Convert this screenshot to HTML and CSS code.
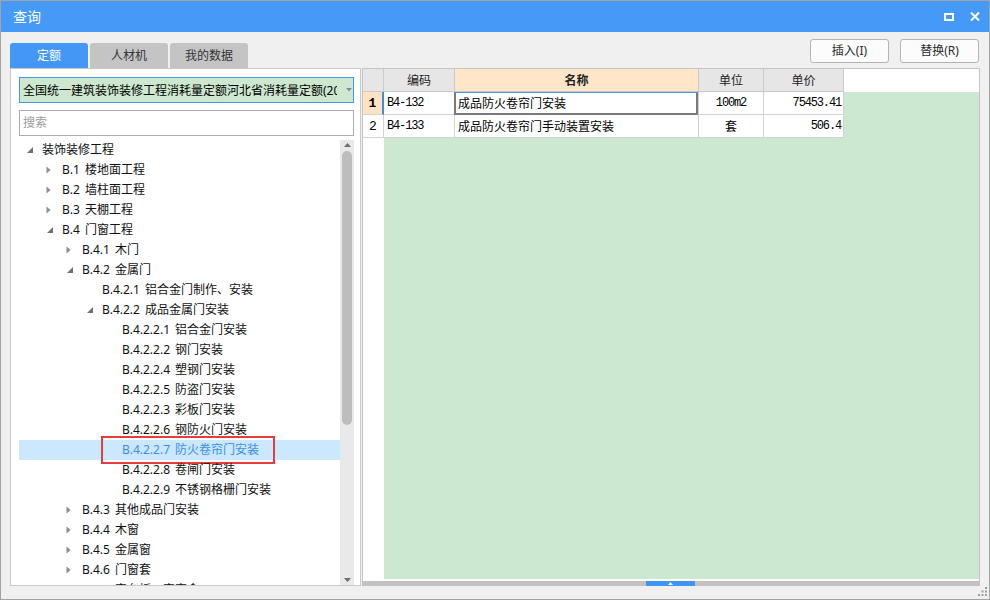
FILE: index.html
```html
<!DOCTYPE html>
<html lang="zh-CN">
<head>
<meta charset="utf-8">
<title>查询</title>
<link rel="stylesheet" href="styles.css">
</head>
<body>
<div class="window">
  <div class="titlebar">
    <span class="title">查询</span>
    <div class="tb-icons">
      <svg width="10" height="8" viewBox="0 0 10 8"><rect x="1" y="1" width="8" height="6" fill="none" stroke="#fff" stroke-width="2"/></svg>
      <svg width="10" height="9" viewBox="0 0 10 9"><path d="M1 0.5L9 8.5M9 0.5L1 8.5" stroke="#fff" stroke-width="2"/></svg>
    </div>
  </div>
  <div class="content">
    <div class="toolbar">
      <div class="tabs">
        <div class="tab active">定额</div>
        <div class="tab">人材机</div>
        <div class="tab">我的数据</div>
      </div>
      <div class="buttons">
        <div class="btn">插入(I)</div>
        <div class="btn">替换(R)</div>
      </div>
    </div>
    <div class="main">
      <div class="left-panel">
        <div class="combo">
          <div class="combo-text">全国统一建筑装饰装修工程消耗量定额河北省消耗量定额(2013)</div>
          <svg class="combo-arrow" width="6" height="4" viewBox="0 0 6 4"><path d="M0 0H6L3 3.5Z" fill="#8c8c8c"/></svg>
        </div>
        <div class="search">搜索</div>
        <div class="tree">
          <div class="tree-rows">
            <div class="row l0"><span class="tg ex"><svg width="6" height="6" viewBox="0 0 6 6"><path d="M6 0V6H0Z" fill="#707070"/></svg></span><span>装饰装修工程</span></div>
            <div class="row l1"><span class="tg co"><svg width="5" height="8" viewBox="0 0 5 8"><path d="M0.5 0.5L4.5 4L0.5 7.5Z" fill="#8a8a8a"/></svg></span><span>B.1 楼地面工程</span></div>
            <div class="row l1"><span class="tg co"><svg width="5" height="8" viewBox="0 0 5 8"><path d="M0.5 0.5L4.5 4L0.5 7.5Z" fill="#8a8a8a"/></svg></span><span>B.2 墙柱面工程</span></div>
            <div class="row l1"><span class="tg co"><svg width="5" height="8" viewBox="0 0 5 8"><path d="M0.5 0.5L4.5 4L0.5 7.5Z" fill="#8a8a8a"/></svg></span><span>B.3 天棚工程</span></div>
            <div class="row l1"><span class="tg ex"><svg width="6" height="6" viewBox="0 0 6 6"><path d="M6 0V6H0Z" fill="#707070"/></svg></span><span>B.4 门窗工程</span></div>
            <div class="row l2"><span class="tg co"><svg width="5" height="8" viewBox="0 0 5 8"><path d="M0.5 0.5L4.5 4L0.5 7.5Z" fill="#8a8a8a"/></svg></span><span>B.4.1 木门</span></div>
            <div class="row l2"><span class="tg ex"><svg width="6" height="6" viewBox="0 0 6 6"><path d="M6 0V6H0Z" fill="#707070"/></svg></span><span>B.4.2 金属门</span></div>
            <div class="row l3"><span class="tg"></span><span>B.4.2.1 铝合金门制作、安装</span></div>
            <div class="row l3"><span class="tg ex"><svg width="6" height="6" viewBox="0 0 6 6"><path d="M6 0V6H0Z" fill="#707070"/></svg></span><span>B.4.2.2 成品金属门安装</span></div>
            <div class="row l4"><span class="tg"></span><span>B.4.2.2.1 铝合金门安装</span></div>
            <div class="row l4"><span class="tg"></span><span>B.4.2.2.2 钢门安装</span></div>
            <div class="row l4"><span class="tg"></span><span>B.4.2.2.4 塑钢门安装</span></div>
            <div class="row l4"><span class="tg"></span><span>B.4.2.2.5 防盗门安装</span></div>
            <div class="row l4"><span class="tg"></span><span>B.4.2.2.3 彩板门安装</span></div>
            <div class="row l4"><span class="tg"></span><span>B.4.2.2.6 钢防火门安装</span></div>
            <div class="row l4 selected"><span class="tg"></span><span>B.4.2.2.7 防火卷帘门安装</span><div class="mark"></div></div>
            <div class="row l4"><span class="tg"></span><span>B.4.2.2.8 卷闸门安装</span></div>
            <div class="row l4"><span class="tg"></span><span>B.4.2.2.9 不锈钢格栅门安装</span></div>
            <div class="row l2"><span class="tg co"><svg width="5" height="8" viewBox="0 0 5 8"><path d="M0.5 0.5L4.5 4L0.5 7.5Z" fill="#8a8a8a"/></svg></span><span>B.4.3 其他成品门安装</span></div>
            <div class="row l2"><span class="tg co"><svg width="5" height="8" viewBox="0 0 5 8"><path d="M0.5 0.5L4.5 4L0.5 7.5Z" fill="#8a8a8a"/></svg></span><span>B.4.4 木窗</span></div>
            <div class="row l2"><span class="tg co"><svg width="5" height="8" viewBox="0 0 5 8"><path d="M0.5 0.5L4.5 4L0.5 7.5Z" fill="#8a8a8a"/></svg></span><span>B.4.5 金属窗</span></div>
            <div class="row l2"><span class="tg co"><svg width="5" height="8" viewBox="0 0 5 8"><path d="M0.5 0.5L4.5 4L0.5 7.5Z" fill="#8a8a8a"/></svg></span><span>B.4.6 门窗套</span></div>
            <div class="row l2"><span class="tg co"><svg width="5" height="8" viewBox="0 0 5 8"><path d="M0.5 0.5L4.5 4L0.5 7.5Z" fill="#8a8a8a"/></svg></span><span>B.4.7 窗台板、窗帘盒</span></div>
          </div>
          <div class="vscroll">
            <svg class="vs-up" width="7" height="4" viewBox="0 0 7 4"><path d="M0 4L3.5 0L7 4Z" fill="#6e6e6e"/></svg>
            <div class="vs-thumb"></div>
            <svg class="vs-down" width="7" height="4" viewBox="0 0 7 4"><path d="M0 0L3.5 4L7 0Z" fill="#6e6e6e"/></svg>
          </div>
        </div>
      </div>
      <div class="grid">
        <div class="grow ghead">
          <div class="c c-no"></div>
          <div class="c c-code">编码</div>
          <div class="c c-name hl">名称</div>
          <div class="c c-unit">单位</div>
          <div class="c c-price">单价</div>
        </div>
        <div class="grow">
          <div class="c c-no cur">1</div>
          <div class="c c-code mono">B4-132</div>
          <div class="c c-name focus">成品防火卷帘门安装</div>
          <div class="c c-unit mono">100m2</div>
          <div class="c c-price mono">75453.41</div>
        </div>
        <div class="grow">
          <div class="c c-no">2</div>
          <div class="c c-code mono">B4-133</div>
          <div class="c c-name">成品防火卷帘门手动装置安装</div>
          <div class="c c-unit">套</div>
          <div class="c c-price mono">506.4</div>
        </div>
        <div class="gbody"></div>
        <div class="gfoot">
          <div class="hscroll">
            <div class="hs-thumb"><svg width="5" height="3" viewBox="0 0 5 3"><path d="M0 3L2.5 0L5 3Z" fill="#fff"/></svg></div>
          </div>
        </div>
      </div>
    </div>
  </div>
  <svg class="grip" width="10" height="10" viewBox="0 0 10 10">
    <rect x="7" y="0" width="2" height="2" fill="#9c9c9c"/>
    <rect x="3.5" y="3.5" width="2" height="2" fill="#9c9c9c"/>
    <rect x="7" y="3.5" width="2" height="2" fill="#9c9c9c"/>
    <rect x="0" y="7" width="2" height="2" fill="#9c9c9c"/>
    <rect x="3.5" y="7" width="2" height="2" fill="#9c9c9c"/>
    <rect x="7" y="7" width="2" height="2" fill="#9c9c9c"/>
  </svg>
</div>
</body>
</html>
```

FILE: styles.css
```css
* { box-sizing: border-box; }
html, body { margin: 0; padding: 0; }
body {
  width: 990px;
  height: 600px;
  overflow: hidden;
  font-family: "Noto Sans", "Noto Sans CJK SC", sans-serif;
  font-size: 12px;
  color: #1e1e1e;
  background: #ffffff;
}

.window {
  position: relative;
  width: 990px;
  height: 600px;
  border: 1px solid #a3a3a3;
  background: #f0f0f0;
  display: flex;
  flex-direction: column;
}

.titlebar {
  height: 31px;
  flex-shrink: 0;
  background: #4599f7;
  color: #ffffff;
  display: flex;
  align-items: center;
  justify-content: space-between;
  padding: 0 9px 0 12px;
}
.title { font-size: 14px; line-height: 31px; }
.tb-icons { display: flex; align-items: center; gap: 16px; }

.content {
  flex: 1;
  display: flex;
  flex-direction: column;
  padding: 0 9px 13px 9px;
  min-height: 0;
}

.toolbar {
  height: 36px;
  flex-shrink: 0;
  display: flex;
  justify-content: space-between;
}
.tabs { display: flex; align-items: flex-end; gap: 2px; }
.tab {
  width: 78px;
  height: 25px;
  line-height: 25px;
  text-align: center;
  font-size: 12px;
  color: #333333;
  background: #c4c4c4;
  border-radius: 3px 3px 0 0;
}
.tab.active { background: #4397f5; color: #ffffff; }

.buttons { display: flex; gap: 11px; padding-top: 7px; margin-right: 1px; }
.btn {
  width: 79px;
  height: 24px;
  line-height: 22px;
  text-align: center;
  background: #fcfcfc;
  border: 1px solid #b4b4b4;
  border-radius: 3px;
  color: #2a2a2a;
}

.main { flex: 1; display: flex; min-height: 0; }

.left-panel {
  width: 351px;
  flex-shrink: 0;
  background: #ffffff;
  border: 1px solid #c9c9c9;
  padding: 8px 6px 0 8px;
  display: flex;
  flex-direction: column;
}
.combo {
  height: 26px;
  flex-shrink: 0;
  border: 1px solid #3d98f2;
  background: #cde8cf;
  display: flex;
  align-items: center;
  padding-left: 3px;
}
.combo-text {
  width: 314px;
  overflow: hidden;
  white-space: nowrap;
  color: #000000;
}
.combo-arrow { margin-left: 9px; }

.search {
  margin-top: 7px;
  height: 26px;
  flex-shrink: 0;
  border: 1px solid #ababab;
  color: #9c9c9c;
  padding-left: 3px;
  line-height: 24px;
}

.tree {
  margin-top: 4px;
  flex: 1;
  min-height: 0;
  display: flex;
  overflow: hidden;
}
.tree-rows { flex: 1; overflow: hidden; }
.row {
  position: relative;
  height: 20px;
  display: flex;
  align-items: center;
  white-space: nowrap;
  line-height: 20px;
  word-spacing: 2px;
  color: #111111;
}
.row.l1 { padding-left: 20px; }
.row.l2 { padding-left: 40px; }
.row.l3 { padding-left: 60px; }
.row.l4 { padding-left: 80px; }
.row.selected { background: #cce8ff; color: #3a8ee6; }
.tg {
  width: 23px;
  height: 20px;
  flex-shrink: 0;
  display: flex;
  align-items: center;
}
.tg.ex svg { margin-left: 8px; }
.tg.co svg { margin-left: 7px; }
.mark {
  position: absolute;
  left: 82px;
  top: -4px;
  width: 174px;
  height: 28px;
  border: 2px solid #e93b3b;
}

.vscroll {
  width: 14px;
  flex-shrink: 0;
  background: #e9e9e9;
  display: flex;
  flex-direction: column;
  align-items: center;
  padding-top: 3px;
}
.vs-up { flex-shrink: 0; }
.vs-thumb {
  margin-top: 4px;
  width: 10px;
  height: 274px;
  border-radius: 5px;
  background: #bdbdbd;
}
.vs-down { margin-top: auto; margin-bottom: 3px; }

.grid {
  flex: 1;
  margin-left: 1px;
  border: 1px solid #c4c4c4;
  border-bottom: none;
  background: #ffffff;
  display: flex;
  flex-direction: column;
}
.grow { display: flex; height: 23px; flex-shrink: 0; }
.c {
  position: relative;
  height: 23px;
  border-right: 1px solid #d2d2d2;
  border-bottom: 1px solid #d2d2d2;
  background: #ffffff;
  display: flex;
  align-items: center;
  padding: 0 3px;
  white-space: nowrap;
  color: #000000;
}
.c-no { width: 21px; justify-content: center; font-family: "Liberation Mono", monospace; font-size: 13px; padding: 0; }
.c-code { width: 71px; }
.c-name { width: 244px; }
.c-unit { width: 65px; justify-content: center; }
.c-price { width: 80px; justify-content: flex-end; }

.ghead .c {
  background: #e6e6e6;
  border-color: #cacaca;
  justify-content: center;
  color: #222222;
}
.ghead .c.hl { background: #ffe6c9; font-weight: bold; }

.c-no.cur { background: #fde3c3; font-weight: bold; border-right: 2px solid #3b8ee6; }
.c.focus::after {
  content: "";
  position: absolute;
  left: -1px;
  top: 0;
  right: 0;
  bottom: -1px;
  border: 2px solid #7a7a7a;
  border-top: 1px solid #4a94e8;
}

.mono {
  font-family: "Liberation Mono", monospace;
  font-size: 12px;
  letter-spacing: -1.15px;
}
.c-price.mono { padding-right: 2px; }

.gbody {
  flex: 1;
  background: linear-gradient(to right, #ffffff 21px, #cde8d0 21px);
}
.grid .grow { background: linear-gradient(to right, #ffffff 21px, #cde8d0 21px); }
.grid .grow.ghead { background: #ffffff; }

.gfoot { height: 7px; flex-shrink: 0; padding-top: 2px; background: #ffffff; }
.hscroll { height: 5px; background: #c2c2c2; padding-left: 283px; }
.hs-thumb {
  width: 49px;
  height: 5px;
  background: #3f95f3;
  display: flex;
  align-items: center;
  justify-content: center;
}

.grip { position: absolute; right: 1px; bottom: 2px; }
```
